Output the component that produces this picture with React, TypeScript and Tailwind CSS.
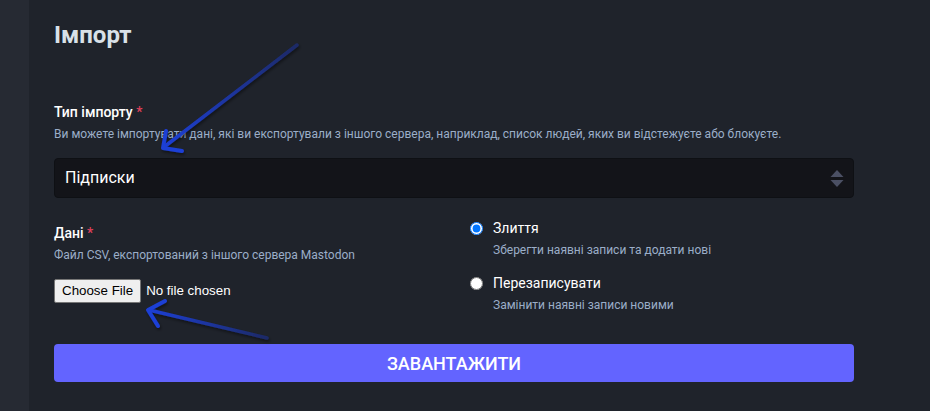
import React from "react";

function Arrows() {
  return (
    <svg
      className="absolute left-0 top-0 pointer-events-none"
      width="930"
      height="411"
      viewBox="0 0 930 411"
    >
      <defs>
        <linearGradient id="g1" x1="297" y1="44" x2="163" y2="148" gradientUnits="userSpaceOnUse">
          <stop offset="0" stopColor="#1c2a66" />
          <stop offset="1" stopColor="#1d3fd6" />
        </linearGradient>
        <linearGradient id="g2" x1="267" y1="338" x2="148" y2="310" gradientUnits="userSpaceOnUse">
          <stop offset="0" stopColor="#1c2a66" />
          <stop offset="1" stopColor="#1d3fd6" />
        </linearGradient>
        <filter id="sh" x="-20%" y="-20%" width="140%" height="140%">
          <feDropShadow dx="1" dy="2" stdDeviation="1.5" floodColor="#000" floodOpacity="0.45" />
        </filter>
      </defs>
      <g filter="url(#sh)" fill="none" strokeLinecap="round" strokeLinejoin="round">
        <path d="M297 45 L164 147" stroke="url(#g1)" strokeWidth="3.5" />
        <path d="M166 131 L163 148 L182 151" stroke="#1d3fd6" strokeWidth="4" />
        <path d="M267 338 L149 310" stroke="url(#g2)" strokeWidth="3.5" />
        <path d="M165 301 L148 310 L158 326" stroke="#1d3fd6" strokeWidth="4" />
      </g>
    </svg>
  );
}

export default function App() {
  return (
    <div className="relative flex w-[930px] h-[411px] overflow-hidden bg-[#1f232b] font-['Roboto',sans-serif]">
      <div className="w-[29px] shrink-0 bg-[#262a33]" />
      <div className="flex-1 pl-[25px] pt-[21px]">
        <div className="w-[800px]">
          <h2 className="text-[24px] leading-[28px] font-bold text-[#d9e1e8]">Імпорт</h2>

          <div className="mt-[53px]">
            <div className="text-[14px] leading-[20px] font-medium text-[#ffffff]">
              Тип імпорту <span className="text-[#df405a]">*</span>
            </div>
            <div className="mt-[4px] text-[12px] leading-[16px] text-[#9baec8]">
              Ви можете імпортувати дані, які ви експортували з іншого сервера, наприклад, список людей, яких ви відстежуєте або блокуєте.
            </div>
            <div className="mt-[16px] h-[40px] flex items-center justify-between rounded-[4px] border border-[#0e1014] bg-[#131419] pl-[10px] pr-[9px]">
              <span className="text-[16px] text-white">Підписки</span>
              <svg width="14" height="17" viewBox="0 0 14 17">
                <path d="M7 0 L13.5 7 L0.5 7 Z" fill="#4b5064" />
                <path d="M0.5 10 L13.5 10 L7 17 Z" fill="#4b5064" />
              </svg>
            </div>
          </div>

          <div className="mt-[20px] grid grid-cols-2">
            <div className="pt-[5px]">
              <div className="text-[14px] leading-[20px] font-medium text-white">
                Дані <span className="text-[#df405a]">*</span>
              </div>
              <div className="mt-[4px] text-[12px] leading-[16px] text-[#9baec8]">
                Файл CSV, експортований з іншого сервера Mastodon
              </div>
              <input
                type="file"
                className="mt-[16px] block text-[13.33px] text-white font-['Liberation_Sans',sans-serif] file:mr-[5px] file:rounded-[2px] file:border file:border-solid file:border-[#767676] file:bg-[#efefef] file:px-[7px] file:py-[1px] file:text-black file:font-['Liberation_Sans',sans-serif] file:text-[13.33px]"
              />
            </div>
            <div className="pl-[16px]">
              <label className="flex items-start gap-[10px]">
                <input type="radio" name="mode" defaultChecked className="m-0 mt-[4px] w-[13px] h-[13px] accent-[#0075ff]" />
                <div>
                  <div className="text-[14px] leading-[20px] text-white">Злиття</div>
                  <div className="mt-[4px] text-[12px] leading-[16px] text-[#9baec8]">Зберегти наявні записи та додати нові</div>
                </div>
              </label>
              <label className="mt-[15px] flex items-start gap-[10px]">
                <input type="radio" name="mode" className="m-0 mt-[4px] w-[13px] h-[13px]" />
                <div>
                  <div className="text-[14px] leading-[20px] text-white">Перезаписувати</div>
                  <div className="mt-[4px] text-[12px] leading-[16px] text-[#9baec8]">Замінити наявні записи новими</div>
                </div>
              </label>
            </div>
          </div>

          <button className="mt-[31px] w-full h-[38px] rounded-[4px] bg-[#6364ff] text-white text-[18px] font-medium uppercase">
            Завантажити
          </button>
        </div>
      </div>
      <Arrows />
    </div>
  );
}
